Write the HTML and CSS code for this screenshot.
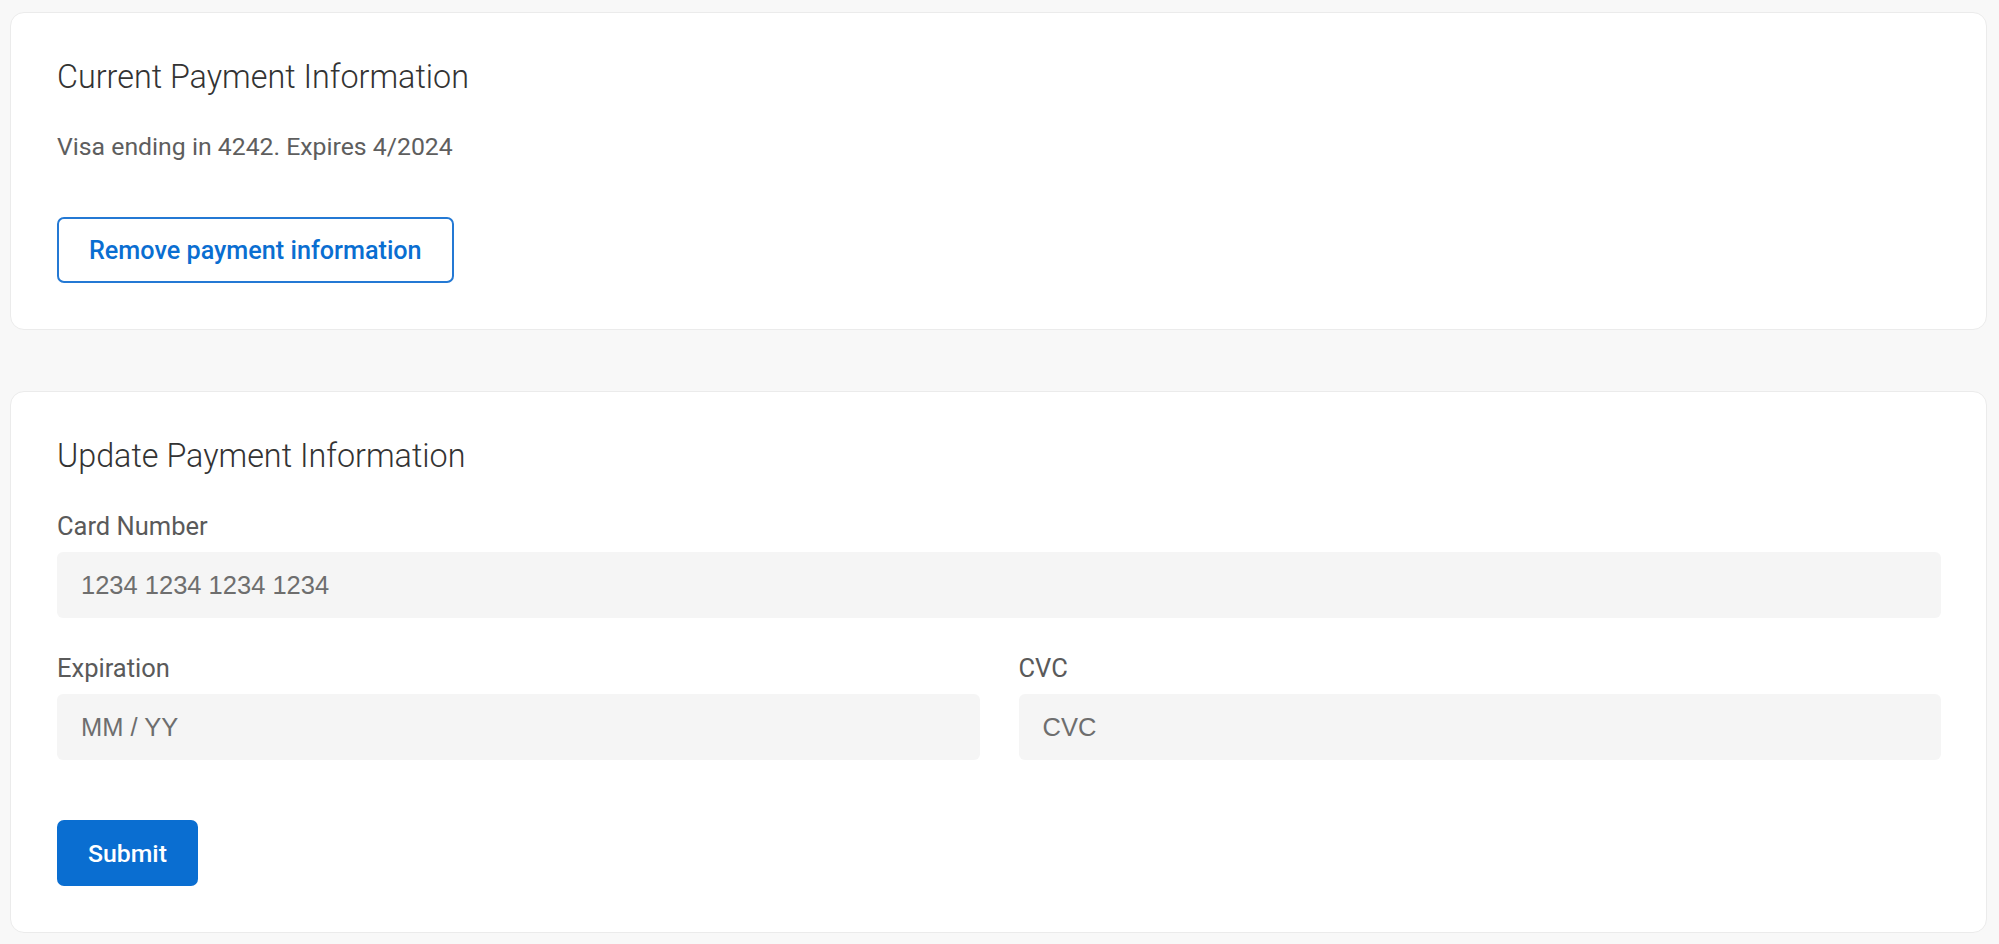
FILE: index.html
```html
<!DOCTYPE html>
<html lang="en">
<head>
<meta charset="utf-8">
<title>Payment Information</title>
<link rel="stylesheet" href="styles.css">
</head>
<body>
<main class="page">
  <section class="card">
    <h2 class="card-title">Current Payment Information</h2>
    <p class="card-text">Visa ending in 4242. Expires 4/2024</p>
    <button class="btn btn-outline" type="button">Remove payment information</button>
  </section>
  <section class="card">
    <h2 class="card-title">Update Payment Information</h2>
    <form class="form">
      <div class="field">
        <label class="field-label" for="card">Card Number</label>
        <input class="field-input" id="card" type="text" placeholder="1234 1234 1234 1234">
      </div>
      <div class="field-row">
        <div class="field">
          <label class="field-label" for="exp">Expiration</label>
          <input class="field-input" id="exp" type="text" placeholder="MM / YY">
        </div>
        <div class="field">
          <label class="field-label" for="cvc">CVC</label>
          <input class="field-input" id="cvc" type="text" placeholder="CVC">
        </div>
      </div>
      <div class="actions">
        <button class="btn btn-primary" type="button">Submit</button>
      </div>
    </form>
  </section>
</main>
</body>
</html>
```

FILE: styles.css
```css
html, body {
  margin: 0;
  padding: 0;
  background: #f8f8f8;
}

body {
  font-family: Roboto, "Liberation Sans", Arial, sans-serif;
  color: #333333;
}

.page {
  padding: 12px 12px 0 10px;
  display: flex;
  flex-direction: column;
  gap: 61px;
}

.card {
  background: #ffffff;
  border: 1px solid #ebebeb;
  border-radius: 14px;
  padding: 44px 45px 46px 46px;
}

.card-title {
  margin: 0;
  font-size: 32.3px;
  line-height: 40px;
  font-weight: 300;
  color: #333333;
}

.card-text {
  margin: 34px 0 0;
  font-size: 24.8px;
  line-height: 32px;
  font-weight: 400;
  color: #5e5e5e;
}

.btn {
  font-family: Roboto, "Liberation Sans", Arial, sans-serif;
  font-weight: 500;
  height: 66px;
  border-radius: 7px;
  cursor: pointer;
}

.btn-outline {
  margin-top: 54px;
  padding: 0 30px;
  font-size: 25.2px;
  background: #ffffff;
  color: #0a6ed1;
  border: 2px solid #2479d4;
}

.btn-primary {
  padding: 0 31px;
  font-size: 24.8px;
  background: #0a6ed1;
  color: #ffffff;
  border: none;
}

.form {
  margin: 35px 0 0;
  display: flex;
  flex-direction: column;
}

.field {
  display: flex;
  flex-direction: column;
  gap: 11px;
}

.field-row {
  margin-top: 35px;
  display: grid;
  grid-template-columns: 1fr 1fr;
  column-gap: 39px;
}

.field-label {
  font-size: 25.5px;
  line-height: 30px;
  font-weight: 400;
  color: #5a5a5a;
}

.field-input {
  box-sizing: border-box;
  width: 100%;
  height: 66px;
  margin: 0;
  padding: 0 24px;
  border: none;
  border-radius: 6px;
  background: #f5f5f5;
  font-family: "Liberation Sans", Arial, sans-serif;
  font-size: 25.5px;
  color: #333333;
  outline: none;
}

.field-input::placeholder {
  color: #6e6e6e;
  opacity: 1;
}

.actions {
  margin-top: 60px;
  display: flex;
}
```
